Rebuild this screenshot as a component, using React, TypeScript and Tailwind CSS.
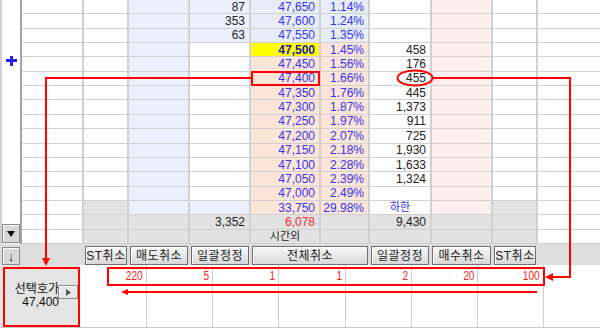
import React from 'react';

const WH = 'bg-white';
const BL = 'bg-[#eaf1fc]';
const BLT = 'bg-[image:repeating-conic-gradient(#e0e8f5_0_25%,#eef3fb_0_50%)] bg-[length:2px_2px]';
const SA = 'bg-[#fbe4d8]';
const PK = 'bg-[#fdeeee]';
const GR = 'bg-[#e2e2e2]';
const YE = 'bg-[#ffff00]';

const VOL = 'text-[#222222]';
const BLU = 'text-[#3434f4]';
const RED = 'text-[#ff2a2a]';

type Cell = { t?: string; bg: string; c?: string; center?: boolean };

const ask = [
  ['87', '47,650', '1.14%'],
  ['353', '47,600', '1.24%'],
  ['63', '47,550', '1.35%'],
];
const bid = [
  ['47,500', '1.45%', '458'],
  ['47,450', '1.56%', '176'],
  ['47,400', '1.66%', '455'],
  ['47,350', '1.76%', '445'],
  ['47,300', '1.87%', '1,373'],
  ['47,250', '1.97%', '911'],
  ['47,200', '2.07%', '725'],
  ['47,150', '2.18%', '1,930'],
  ['47,100', '2.28%', '1,633'],
  ['47,050', '2.39%', '1,324'],
  ['47,000', '2.49%', ''],
];

const rows: Cell[][] = [];
ask.forEach(([v, p, pc]) =>
  rows.push([
    { bg: WH }, { bg: WH }, { bg: BL },
    { bg: BL, t: v, c: VOL },
    { bg: BLT, t: p, c: BLU },
    { bg: BLT, t: pc, c: BLU },
    { bg: WH }, { bg: PK }, { bg: WH }, { bg: WH },
  ])
);
bid.forEach(([p, pc, v], i) =>
  rows.push([
    { bg: WH }, { bg: WH }, { bg: BL }, { bg: WH },
    i === 0 ? { bg: YE, t: p, c: 'font-bold text-[#1c1cb4]' } : { bg: SA, t: p, c: BLU },
    { bg: SA, t: pc, c: BLU },
    { bg: WH, t: v, c: VOL },
    { bg: PK }, { bg: WH }, { bg: WH },
  ])
);
rows.push([
  { bg: WH }, { bg: GR }, { bg: BL }, { bg: BL },
  { bg: SA, t: '33,750', c: BLU },
  { bg: SA, t: '29.98%', c: BLU },
  { bg: WH, t: '하한', c: 'text-[11px] text-[#2f2fe8]', center: true },
  { bg: PK }, { bg: GR }, { bg: WH },
]);
rows.push([
  { bg: WH }, { bg: GR }, { bg: GR },
  { bg: GR, t: '3,352', c: VOL },
  { bg: GR, t: '6,078', c: RED },
  { bg: GR },
  { bg: GR, t: '9,430', c: VOL },
  { bg: GR }, { bg: GR }, { bg: WH },
]);
rows.push([
  { bg: WH }, { bg: GR }, { bg: GR }, { bg: GR },
  { bg: GR, t: '시간외', c: 'text-[11px] text-[#222222]', center: true },
  { bg: GR }, { bg: GR }, { bg: GR }, { bg: GR }, { bg: WH },
]);

const buttons: { t: string; w: string }[] = [
  { t: 'ST취소', w: 'w-[42px]' },
  { t: '매도취소', w: 'w-[58px]' },
  { t: '일괄정정', w: 'w-[58px]' },
  { t: '전체취소', w: 'w-[116px]' },
  { t: '일괄정정', w: 'w-[58px]' },
  { t: '매수취소', w: 'w-[59px]' },
  { t: 'ST취소', w: 'w-[42px]' },
];

const bottomVals: { v: string; w: string }[] = [
  { v: '220', w: 'w-[67px]' },
  { v: '5', w: 'w-[66px]' },
  { v: '1', w: 'w-[66px]' },
  { v: '1', w: 'w-[67px]' },
  { v: '2', w: 'w-[66px]' },
  { v: '20', w: 'w-[66px]' },
  { v: '100', w: 'w-[66px]' },
];

function Btn({ t, w }: { t: string; w: string }) {
  return (
    <div
      className={`${w} h-[19px] flex items-center justify-center text-[12px] leading-none tracking-[0.5px] text-[#222222] border border-[#6f6f6f] bg-linear-to-b from-[#f8f8f8] to-[#d8d8d8] shadow-[inset_1px_1px_0_#ffffff]`}
    >
      {t}
    </div>
  );
}

export default function App() {
  return (
    <div className="relative w-[600px] h-[328px] bg-white overflow-hidden font-[family-name:Liberation_Sans,Noto_Sans_CJK_KR,sans-serif] text-[12px]">
      {/* top table */}
      <div className="flex h-[244px]">
        <div className="w-[22px] flex flex-col border-l-2 border-r-2 border-l-[#d2d2d2] border-r-[#a4a4a4] bg-white">
          <div className="flex-1 relative">
            <svg className="absolute left-[3px] top-[56px]" width="13" height="10" viewBox="0 0 13 10">
              <rect x="1" y="3" width="11" height="3" fill="#2020f0" />
              <rect x="5" y="0" width="3" height="10" fill="#2020f0" />
            </svg>
          </div>
          <div className="h-[19px] mb-px flex items-center justify-center bg-[#d8d8d8] border border-[#8a8a8a] shadow-[inset_1px_1px_0_#ffffff]">
            <svg width="8" height="6" viewBox="0 0 8 6">
              <polygon points="0,0 8,0 4,6" fill="#111111" />
            </svg>
          </div>
        </div>
        <div className="flex-1 grid grid-cols-[60px_43px_59px_59px_68px_47px_60px_59px_43px_1fr] grid-rows-[repeat(17,minmax(0,1fr))] gap-x-[2px] gap-y-px pb-px bg-[#d0d0d0]">
          {rows.flat().map((cell, i) => (
            <div
              key={i}
              className={`${cell.bg} ${cell.center ? 'justify-center' : 'justify-end pr-1'} ${cell.c ?? ''} flex items-center whitespace-nowrap overflow-hidden leading-none`}
            >
              {cell.t}
            </div>
          ))}
        </div>
      </div>

      {/* buttons row */}
      <div className="flex h-[21px] bg-[image:repeating-conic-gradient(#d0d0d0_0_25%,#ebebeb_0_50%)] bg-[length:2px_2px]">
        <div className="w-[22px] flex items-end px-[2px]">
          <div className="w-[18px] h-[18px] flex items-center justify-center bg-[#d8d8d8] border border-[#8a8a8a] shadow-[inset_1px_1px_0_#ffffff] text-[13px] leading-none text-[#222222]">
            ↓
          </div>
        </div>
        <div className="ml-[63px] flex gap-[3px] pt-[2px]">
          {buttons.map((b, i) => (
            <Btn key={i} t={b.t} w={b.w} />
          ))}
        </div>
      </div>

      {/* bottom section */}
      <div className="flex h-[63px] border-b border-[#c8c8c8]">
        <div className="relative w-[80px] bg-[#e4e4e4] flex items-center justify-end pr-[21px]">
          <div className="text-right leading-[13px] text-[#111111]">
            <div className="text-[12px]">선택호가</div>
            <div className="text-[12px]">47,400</div>
          </div>
          <div className="absolute left-[58px] top-[20px] w-[20px] h-[14px] flex items-center justify-center bg-[#e8e8e8] border border-[#8a8a8a] shadow-[inset_1px_1px_0_#ffffff]">
            <svg width="5" height="7" viewBox="0 0 5 7">
              <polygon points="0,0 5,3.5 0,7" fill="#555555" />
            </svg>
          </div>
        </div>
        {bottomVals.map((b, i) => (
          <div key={i} className={`${b.w} border-r border-[#cfcfcf] flex flex-col`}>
            <div className="h-[21px] flex items-center justify-end pr-[3px]">
              <span className="inline-block origin-right scale-x-[0.78] text-[13px] leading-none text-[#ff1a1a]">{b.v}</span>
            </div>
          </div>
        ))}
        <div className="flex-1" />
      </div>

      {/* annotations */}
      <svg className="absolute inset-0 pointer-events-none" width="600" height="328" viewBox="0 0 600 328">
        <g fill="none" stroke="#ff0000" strokeWidth="2" shapeRendering="crispEdges">
          <rect x="252" y="72" width="67" height="13" />
          <polyline points="251,78 46,78 46,259" />
          <polyline points="433,78 570,78 570,277 552,277" />
          <rect x="108" y="268" width="436" height="17" />
          <line x1="127" y1="292" x2="537" y2="292" />
          <rect x="4" y="268" width="75" height="58" />
        </g>
        <ellipse cx="415" cy="78" rx="17.5" ry="7.5" fill="none" stroke="#ff0000" strokeWidth="2" />
        <polygon points="46,266 42,258 50,258" fill="#ff0000" />
        <polygon points="545,277 553,273 553,281" fill="#ff0000" />
        <polygon points="121,292 128,289 128,295" fill="#ff0000" />
      </svg>
    </div>
  );
}
